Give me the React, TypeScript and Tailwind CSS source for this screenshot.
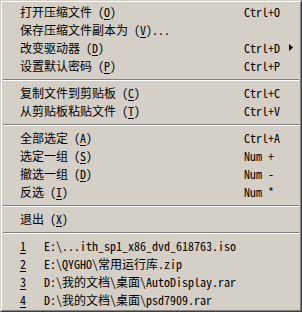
import React from "react";

// 经典 Win2000 风格的文件菜单
const FONT =
  "font-['Noto_Sans_Mono_CJK_SC','Noto_Sans_CJK_SC','Liberation_Mono',monospace] text-[12px] leading-[12px] text-black";

type Entry =
  | { type: "item"; label: string; k: string; suffix?: string; shortcut?: string; arrow?: boolean }
  | { type: "sep" };

const entries: Entry[] = [
  { type: "item", label: "打开压缩文件", k: "O", shortcut: "Ctrl+O" },
  { type: "item", label: "保存压缩文件副本为", k: "V", suffix: "..." },
  { type: "item", label: "改变驱动器", k: "D", shortcut: "Ctrl+D", arrow: true },
  { type: "item", label: "设置默认密码", k: "P", shortcut: "Ctrl+P" },
  { type: "sep" },
  { type: "item", label: "复制文件到剪贴板", k: "C", shortcut: "Ctrl+C" },
  { type: "item", label: "从剪贴板粘贴文件", k: "T", shortcut: "Ctrl+V" },
  { type: "sep" },
  { type: "item", label: "全部选定", k: "A", shortcut: "Ctrl+A" },
  { type: "item", label: "选定一组", k: "S", shortcut: "Num +" },
  { type: "item", label: "撤选一组", k: "D", shortcut: "Num -" },
  { type: "item", label: "反选", k: "I", shortcut: "Num *" },
  { type: "sep" },
  { type: "item", label: "退出", k: "X" },
  { type: "sep" },
];

const recent = [
  "E:\\...ith_sp1_x86_dvd_618763.iso",
  "E:\\QYGHO\\常用运行库.zip",
  "D:\\我的文档\\桌面\\AutoDisplay.rar",
  "D:\\我的文档\\桌面\\psd7909.rar",
];

function Separator() {
  return (
    <div className="flex h-[9px] flex-col justify-center">
      <div className="h-px bg-[#808080]" />
      <div className="h-px bg-white" />
    </div>
  );
}

export default function App() {
  return (
    <div className={`h-[312px] w-[302px] ${FONT}`}>
      <div className="h-full border border-t-[#d4d0c8] border-l-[#d4d0c8] border-b-[#404040] border-r-[#404040] bg-[#d4d0c8]">
        <div className="flex h-full flex-col border border-t-white border-l-white border-b-[#808080] border-r-[#808080] p-px">
          {entries.map((e, i) =>
            e.type === "sep" ? (
              <Separator key={i} />
            ) : (
              <div key={i} className="relative flex h-[18px] items-center pl-[17px]">
                <span className="w-[224px] shrink-0 whitespace-pre">
                  {e.label} (<span className="underline underline-offset-2">{e.k}</span>){e.suffix}
                </span>
                <span className="whitespace-pre">{e.shortcut}</span>
                {e.arrow && (
                  <svg
                    className="absolute right-[6px] top-[5px]"
                    width="4"
                    height="7"
                    viewBox="0 0 4 7"
                  >
                    <path d="M0 0 L4 3.5 L0 7 Z" fill="#000" />
                  </svg>
                )}
              </div>
            )
          )}
          {recent.map((p, i) => (
            <div key={p} className="flex h-[18px] items-center pl-[17px]">
              <span className="w-[24px] shrink-0 underline underline-offset-2">{i + 1}</span>
              <span className="whitespace-pre">{p}</span>
            </div>
          ))}
        </div>
      </div>
    </div>
  );
}
